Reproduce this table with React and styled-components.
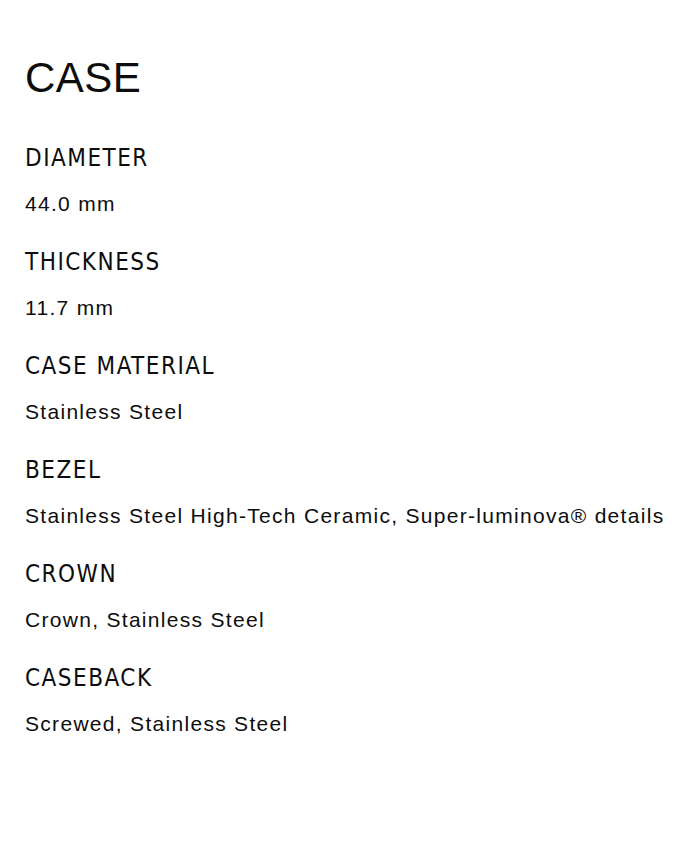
import styled, { createGlobalStyle } from "styled-components"

const GlobalStyle = createGlobalStyle`
  body {
    margin: 0;
    background: #fff;
  }
`

const Section = styled.section`
  padding: 53px 25px;
  color: #0d0d0d;
`

const Title = styled.h2`
  margin: 0 0 40px;
  font-family: "Liberation Sans", Arial, sans-serif;
  font-size: 42px;
  line-height: 50px;
  font-weight: 400;
  letter-spacing: 0.5px;
`

const List = styled.dl`
  margin: 0;
  display: flex;
  flex-direction: column;
  gap: 31px;
`

const Item = styled.div`
  display: flex;
  flex-direction: column;
  gap: 19px;
`

const Label = styled.dt`
  font-family: "Liberation Sans Narrow", "DejaVu Sans Condensed", "Roboto Condensed", sans-serif;
  font-size: 24px;
  line-height: 30px;
  letter-spacing: 1.5px;
  text-transform: uppercase;
`

const Value = styled.dd`
  margin: 0;
  font-family: "Liberation Sans", Arial, sans-serif;
  font-size: 21px;
  line-height: 24px;
  letter-spacing: 1.3px;
`

const specs = [
  ["Diameter", "44.0 mm"],
  ["Thickness", "11.7 mm"],
  ["Case material", "Stainless Steel"],
  ["Bezel", "Stainless Steel High-Tech Ceramic, Super-luminova® details"],
  ["Crown", "Crown, Stainless Steel"],
  ["Caseback", "Screwed, Stainless Steel"],
]

export default function App() {
  return (
    <>
      <GlobalStyle />
      <Section>
        <Title>CASE</Title>
        <List>
          {specs.map(([label, value]) => (
            <Item key={label}>
              <Label>{label}</Label>
              <Value>{value}</Value>
            </Item>
          ))}
        </List>
      </Section>
    </>
  )
}
